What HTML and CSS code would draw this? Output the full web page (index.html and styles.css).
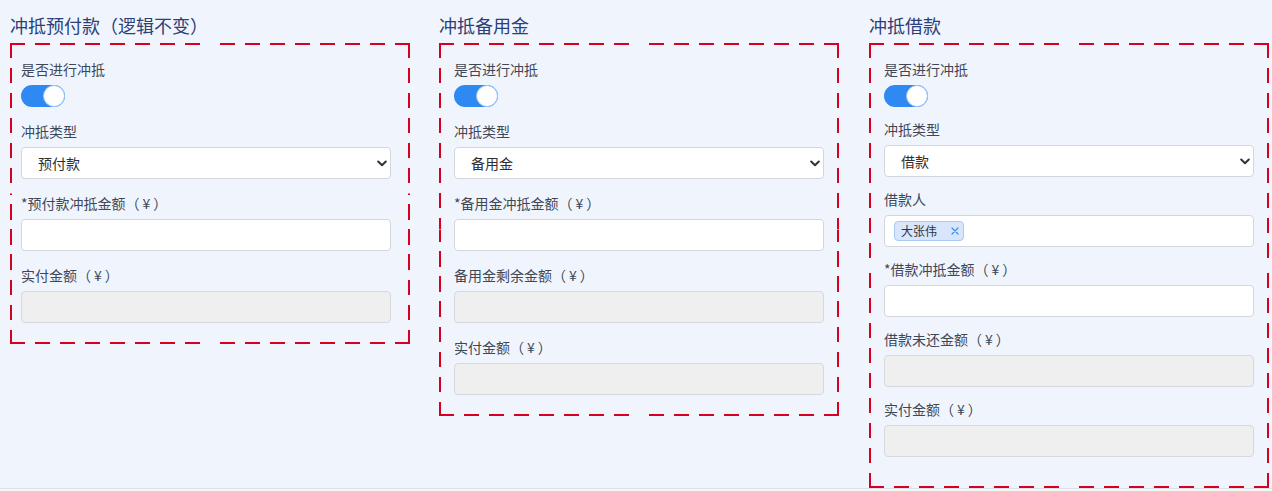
FILE: index.html
```html
<!DOCTYPE html>
<html lang="zh-CN">
<head>
<meta charset="utf-8">
<title>冲抵</title>
<link rel="stylesheet" href="styles.css">
</head>
<body>
<div class="page">
  <section class="col">
    <h2 class="title">冲抵预付款（逻辑不变）</h2>
    <div class="box box-a">
      <div class="field">
        <div class="label">是否进行冲抵</div>
        <div class="switch"><span class="knob"></span></div>
      </div>
      <div class="field">
        <div class="label">冲抵类型</div>
        <div class="select"><span>预付款</span><svg class="chev" width="10" height="7" viewBox="0 0 10 7"><polyline points="1.2,1.5 5,5.2 8.8,1.5" fill="none" stroke="#333" stroke-width="2" stroke-linecap="round" stroke-linejoin="round"/></svg></div>
      </div>
      <div class="field">
        <div class="label">*预付款冲抵金额（<span class="yen">¥</span>）</div>
        <input class="input" type="text">
      </div>
      <div class="field">
        <div class="label">实付金额（<span class="yen">¥</span>）</div>
        <input class="input" type="text" disabled>
      </div>
    </div>
  </section>

  <section class="col">
    <h2 class="title">冲抵备用金</h2>
    <div class="box box-b">
      <div class="field">
        <div class="label">是否进行冲抵</div>
        <div class="switch"><span class="knob"></span></div>
      </div>
      <div class="field">
        <div class="label">冲抵类型</div>
        <div class="select"><span>备用金</span><svg class="chev" width="10" height="7" viewBox="0 0 10 7"><polyline points="1.2,1.5 5,5.2 8.8,1.5" fill="none" stroke="#333" stroke-width="2" stroke-linecap="round" stroke-linejoin="round"/></svg></div>
      </div>
      <div class="field">
        <div class="label">*备用金冲抵金额（<span class="yen">¥</span>）</div>
        <input class="input" type="text">
      </div>
      <div class="field">
        <div class="label">备用金剩余金额（<span class="yen">¥</span>）</div>
        <input class="input" type="text" disabled>
      </div>
      <div class="field">
        <div class="label">实付金额（<span class="yen">¥</span>）</div>
        <input class="input" type="text" disabled>
      </div>
    </div>
  </section>

  <section class="col">
    <h2 class="title">冲抵借款</h2>
    <div class="box box-c">
      <div class="field">
        <div class="label">是否进行冲抵</div>
        <div class="switch"><span class="knob"></span></div>
      </div>
      <div class="field">
        <div class="label">冲抵类型</div>
        <div class="select"><span>借款</span><svg class="chev" width="10" height="7" viewBox="0 0 10 7"><polyline points="1.2,1.5 5,5.2 8.8,1.5" fill="none" stroke="#333" stroke-width="2" stroke-linecap="round" stroke-linejoin="round"/></svg></div>
      </div>
      <div class="field">
        <div class="label">借款人</div>
        <div class="tags">
          <span class="tag"><span>大张伟</span><svg class="tag-x" width="8" height="8" viewBox="0 0 8 8"><path d="M1 1L7 7M7 1L1 7" stroke="#3b8bf0" stroke-width="1.2" stroke-linecap="round"/></svg></span>
        </div>
      </div>
      <div class="field">
        <div class="label">*借款冲抵金额（<span class="yen">¥</span>）</div>
        <input class="input" type="text">
      </div>
      <div class="field">
        <div class="label">借款未还金额（<span class="yen">¥</span>）</div>
        <input class="input" type="text" disabled>
      </div>
      <div class="field">
        <div class="label">实付金额（<span class="yen">¥</span>）</div>
        <input class="input" type="text" disabled>
      </div>
    </div>
  </section>
</div>
</body>
</html>
```

FILE: styles.css
```css
html, body {
  margin: 0;
  padding: 0;
}

body {
  background: #f6f7f9;
  font-family: "Noto Sans CJK SC", "Noto Sans", sans-serif;
  color: #3f4756;
}

.page {
  box-sizing: border-box;
  height: 489px;
  padding: 12px 0 0 10px;
  background: #f0f5fd;
  border-bottom: 1px solid #dde1e7;
  display: grid;
  grid-template-columns: 429px 430px 400px;
  align-items: start;
}

.col {
  display: flex;
  flex-direction: column;
}

.title {
  margin: 0 0 5px;
  font-size: 18px;
  font-weight: 400;
  line-height: 26px;
  color: #2b4079;
  white-space: nowrap;
}

.box {
  --dash: #d7001f;
  width: 400px;
  box-sizing: border-box;
  padding: 16px 15px 21px 15px;
  background:
    repeating-linear-gradient(90deg, var(--dash) 0 15px, transparent 15px 25px) left top / 50% 2px no-repeat,
    repeating-linear-gradient(270deg, var(--dash) 0 15px, transparent 15px 25px) right top / 50% 2px no-repeat,
    repeating-linear-gradient(90deg, var(--dash) 0 15px, transparent 15px 25px) left bottom / 50% 2px no-repeat,
    repeating-linear-gradient(270deg, var(--dash) 0 15px, transparent 15px 25px) right bottom / 50% 2px no-repeat,
    repeating-linear-gradient(180deg, var(--dash) 0 15px, transparent 15px 25px) left top / 2px 50% no-repeat,
    repeating-linear-gradient(0deg, var(--dash) 0 15px, transparent 15px 25px) left bottom / 2px 50% no-repeat,
    repeating-linear-gradient(180deg, var(--dash) 0 15px, transparent 15px 25px) right top / 2px 50% no-repeat,
    repeating-linear-gradient(0deg, var(--dash) 0 15px, transparent 15px 25px) right bottom / 2px 50% no-repeat;
}

.box-a {
  padding-left: 11px;
  padding-right: 19px;
}

.box-c {
  padding-bottom: 31px;
}

.field + .field {
  margin-top: 14px;
}

.box-c .field + .field {
  margin-top: 12px;
}

.label {
  font-size: 14px;
  line-height: 20px;
  color: #3f4756;
  margin-bottom: 6px;
  white-space: nowrap;
}

.yen {
  padding: 0 3px;
}

.switch {
  width: 44px;
  height: 22px;
  border-radius: 11px;
  background: #2e89f2;
  display: flex;
  justify-content: flex-end;
}

.knob {
  width: 22px;
  height: 22px;
  box-sizing: border-box;
  border-radius: 50%;
  background: #ffffff;
  border: 1px solid #9fc6f7;
}

.select,
.input,
.tags {
  display: flex;
  align-items: center;
  box-sizing: border-box;
  width: 370px;
  height: 32px;
  margin: 0;
  border: 1px solid #d3d6db;
  border-radius: 4px;
  background: #ffffff;
  font-family: inherit;
}

.select {
  justify-content: space-between;
  padding: 0 3px 0 16px;
  font-size: 14px;
  color: #2f2f2f;
}

.chev {
  display: block;
}

.input {
  padding: 0 12px;
  font-size: 14px;
  outline: none;
}

.input:disabled {
  background: #efefef;
  border-color: #d6d8dc;
}

.tags {
  padding-left: 9px;
}

.tag {
  display: inline-flex;
  align-items: center;
  box-sizing: border-box;
  height: 20px;
  padding: 0 4px 0 6px;
  border: 1px solid #aac9f4;
  border-radius: 4px;
  background: #d7e6fb;
  font-size: 12px;
  line-height: 18px;
  color: #2f3440;
}

.tag-x {
  display: block;
  margin-left: 14px;
}
```
